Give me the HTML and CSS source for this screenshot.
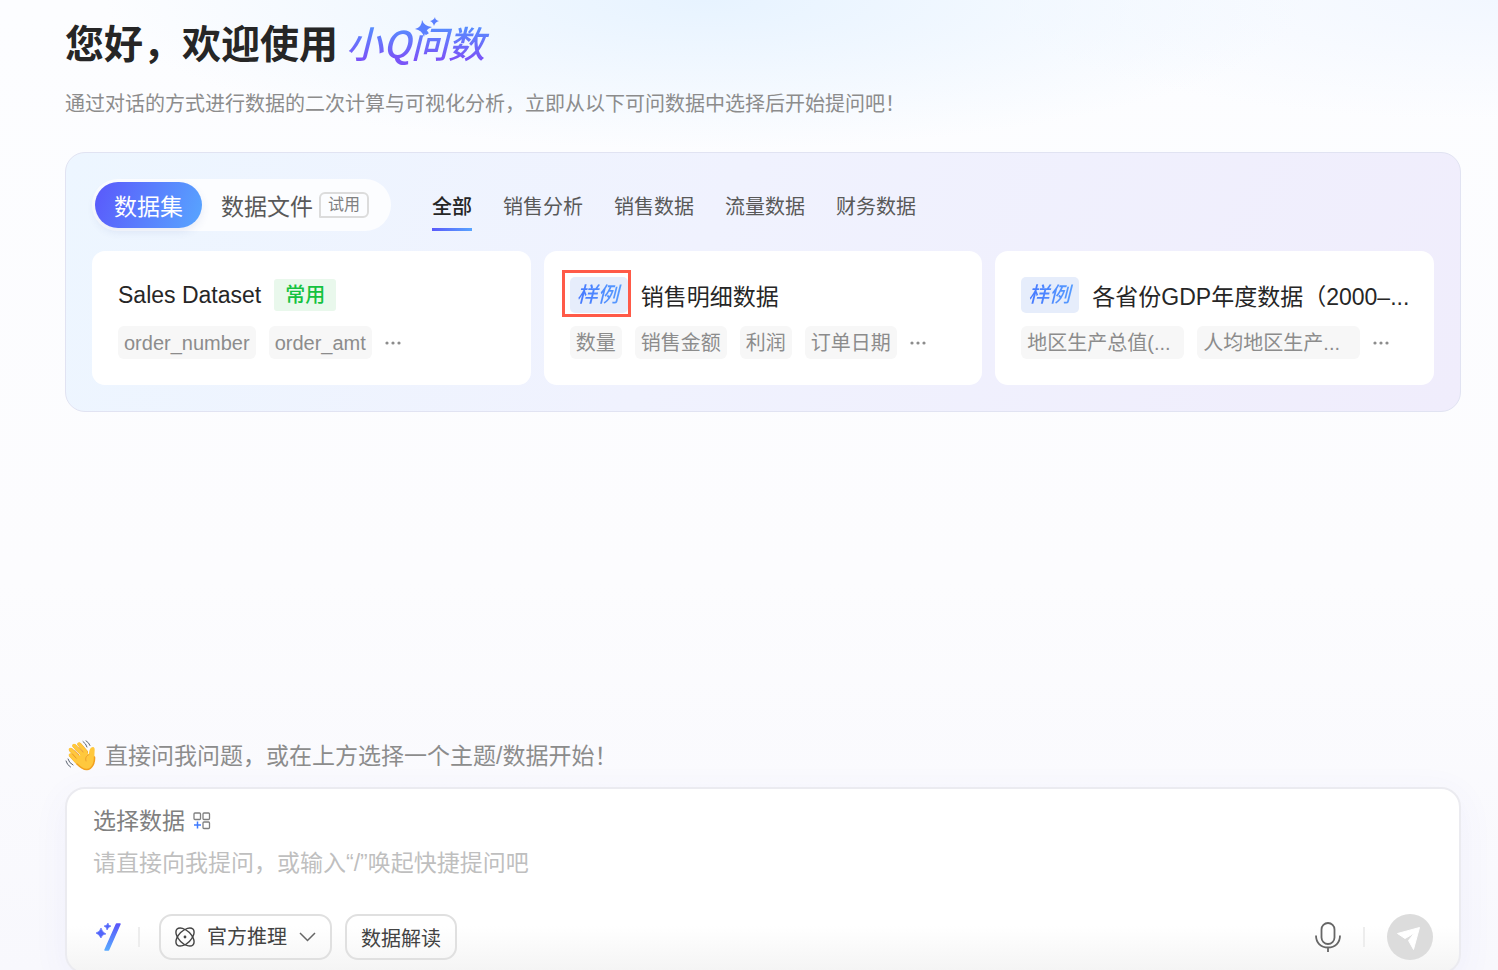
FILE: index.html
```html
<!DOCTYPE html>
<html lang="zh-CN">
<head>
  <meta charset="UTF-8" />
  <meta name="viewport" content="width=device-width, initial-scale=1.0" />
  <title>小Q问数</title>
  <link rel="stylesheet" href="styles.css">
</head>
<body>
  <main class="page">
    <header>
      <h1>您好，欢迎使用
        <span class="logo">
          <span class="logo-text">小Q问数</span>
          <svg class="logo-stars" width="26" height="24" viewBox="0 0 26 24" fill="#5b80ff">
            <path d="M7 3Q9 9 17 10Q10 12 9 20Q7 13 0 12Q7 10 7 3z" />
            <path d="M20 0Q20 3 24 4Q20 5 19 9Q18 5 15 4Q19 3 20 0z" />
          </svg>
        </span>
      </h1>
      <p class="subtitle">通过对话的方式进行数据的二次计算与可视化分析，立即从以下可问数据中选择后开始提问吧！</p>
    </header>

    <section class="panel">
      <div class="panel-top">
        <div class="switch">
          <button class="switch-item active">数据集</button>
          <button class="switch-item">数据文件<span class="trial">试用</span></button>
        </div>
        <nav class="tabs">
          <button class="tab active">全部</button>
          <button class="tab">销售分析</button>
          <button class="tab">销售数据</button>
          <button class="tab">流量数据</button>
          <button class="tab">财务数据</button>
        </nav>
      </div>

      <div class="cards">
        <article class="card">
          <div class="card-title">
            <h2>Sales Dataset</h2>
            <span class="common">常用</span>
          </div>
          <div class="tags">
            <span class="tag">order_number</span>
            <span class="tag">order_amt</span>
            <button class="more" aria-label="更多"><svg width="16" height="4" viewBox="0 0 16 4"><circle cx="2" cy="2" r="1.6" /><circle cx="8" cy="2" r="1.6" /><circle cx="14" cy="2" r="1.6" /></svg></button>
          </div>
        </article>
        <article class="card">
          <div class="card-title">
            <span class="sample marked"><span>样例</span></span>
            <h2>销售明细数据</h2>
          </div>
          <div class="tags">
            <span class="tag">数量</span>
            <span class="tag">销售金额</span>
            <span class="tag">利润</span>
            <span class="tag">订单日期</span>
            <button class="more" aria-label="更多"><svg width="16" height="4" viewBox="0 0 16 4"><circle cx="2" cy="2" r="1.6" /><circle cx="8" cy="2" r="1.6" /><circle cx="14" cy="2" r="1.6" /></svg></button>
          </div>
        </article>
        <article class="card">
          <div class="card-title">
            <span class="sample"><span>样例</span></span>
            <h2>各省份GDP年度数据（2000–...</h2>
          </div>
          <div class="tags">
            <span class="tag long">地区生产总值(...</span>
            <span class="tag long">人均地区生产...</span>
            <button class="more" aria-label="更多"><svg width="16" height="4" viewBox="0 0 16 4"><circle cx="2" cy="2" r="1.6" /><circle cx="8" cy="2" r="1.6" /><circle cx="14" cy="2" r="1.6" /></svg></button>
          </div>
        </article>
      </div>
    </section>

    <div class="hint">
      <svg width="32" height="32" viewBox="0 0 32 32" fill="none" stroke-linecap="round">
        <path d="M6 15.500 13 23M6 10 15 19M9.500 6 18 15M14.500 4.500 21 12" stroke="#f0a52a" stroke-width="4" />
        <path d="M5.500 15 12 22M5.500 9.500 14 18M9 5.500 17 14M14 4 20.500 11.500" stroke="#ffc83d" stroke-width="3.400" />
        <path d="M11 20 20 10 24 14.500C24 11 25 7 28 7 31 7.500 29 12 29.500 17 30 23 27 29 22 29.500 17 30 13 26 9.500 21z" fill="#ffc83d" />
        <path d="M29.500 17C30 23 27 29 22 29.500 18 30 15 27 12 24" stroke="#f2a01e" stroke-width="1.500" />
        <path d="M24 14.500C21 16 20 18 21 21M11 18 7.500 14M14 15 9.500 10M18 12 14 7.500" stroke="#e8962a" stroke-width="0.800" />
        <path d="M18 1.500Q21 3.500 22 7M21 0.800Q24 2.500 25 5.500M3 19Q4 23 8 25M1 21Q2 25 5.500 27" stroke="#5c6470" />
      </svg>
      <span>直接问我问题，或在上方选择一个主题/数据开始！</span>
    </div>

    <form class="composer">
      <button type="button" class="pick">选择数据
        <svg width="18" height="18" viewBox="0 0 18 18" fill="none" stroke="#808080" stroke-width="1.300">
          <rect x="1" y="1" width="6.500" height="6.500" rx="1" />
          <rect x="10" y="1" width="6.500" height="6.500" rx="1" />
          <rect x="10" y="10" width="6.500" height="6.500" rx="1" />
          <path d="M4.500 9.500v7M1 13h7" stroke="#3f7bff" stroke-width="1.500" />
        </svg>
      </button>
      <input class="question" type="text" aria-label="提问" placeholder="请直接向我提问，或输入“/”唤起快捷提问吧" />
      <div class="toolbar">
        <button type="button" class="icon-btn" aria-label="快捷提问">
          <svg width="26" height="30" viewBox="0 0 26 30">
            <defs>
              <linearGradient id="wand" x1="0" y1="0" x2="0" y2="1">
                <stop offset="0" stop-color="#5a55fa" />
                <stop offset="1" stop-color="#58a9ff" />
              </linearGradient>
            </defs>
            <path d="M20.500 2h3.500L12.500 28H9z" fill="url(#wand)" stroke="url(#wand)" stroke-width="1.500" stroke-linejoin="round" />
            <path d="M5 6Q6 10 10 12Q6 12 5 16Q3 12 0 11Q4 10 5 6z" fill="#5165fb" stroke="#5165fb" stroke-width="0.600" />
            <path d="M12 1Q12 4 15 4Q12 5 11 8Q11 5 8 4Q11 4 12 1z" fill="#5165fb" stroke="#5165fb" stroke-width="0.600" />
          </svg>
        </button>
        <span class="divider"></span>
        <label class="pill">
          <svg width="20" height="20" viewBox="0 0 20 20" fill="none" stroke="#444" stroke-width="1.400">
            <ellipse cx="10" cy="10" rx="11.200" ry="6.200" transform="rotate(45 10 10)" />
            <ellipse cx="10" cy="10" rx="11.200" ry="6.200" transform="rotate(-45 10 10)" />
            <circle cx="10" cy="10" r="1.400" fill="#444" stroke="none" />
          </svg>
          <select aria-label="推理模型">
            <option>官方推理</option>
          </select>
          <svg width="17" height="10" viewBox="0 0 17 10" fill="none" stroke="#666" stroke-width="1.500"><path d="M1 1l7.500 7.500L16 1" /></svg>
        </label>
        <button type="button" class="pill">数据解读</button>
        <button type="button" class="icon-btn mic" aria-label="语音输入">
          <svg width="26" height="30" viewBox="0 0 26 30" fill="none" stroke="#666" stroke-width="1.800">
            <rect x="6.500" y="1" width="13" height="21" rx="6.500" />
            <path d="M1 13.500C1 21 6 25.500 13 25.500S25 21 25 13.500M13 25.500V30" />
          </svg>
        </button>
        <span class="divider"></span>
        <button type="submit" class="send" aria-label="发送">
          <svg width="46" height="46" viewBox="0 0 46 46" fill="#fff" stroke="#fff" stroke-linejoin="round">
            <path d="M10.500 19.500 32.500 13.500 26.500 35.500 21.500 26.500 27.500 19 18 24.500z" />
          </svg>
        </button>
      </div>
    </form>
  </main>
</body>
</html>
```
FILE: styles.css
```css
* {
  box-sizing: border-box;
  margin: 0;
  padding: 0;
}
body {
  font-family: "Liberation Sans", "Noto Sans CJK SC", sans-serif;
  color: #262626;
  background-color: #fcfcfe;
  overflow: hidden;
}
button, input, select {
  font-family: inherit;
  color: inherit;
  background: none;
  border: none;
}
button {
  cursor: pointer;
}
svg {
  display: block;
  flex-shrink: 0;
}
.page {
  display: flex;
  flex-direction: column;
  height: 100vh;
  padding: 18px 37px 0 65px;
  background:
    radial-gradient(ellipse 600px 150px at 47% 0, #e7f3ff, rgba(231,243,255,0)),
    radial-gradient(ellipse 500px 120px at 100% 0, #f2f7ff, rgba(242,247,255,0)),
    linear-gradient(#fcfdff, #fcfcfe 60%, #f8f8fd);
}
h1 {
  display: flex;
  align-items: center;
  gap: 8px;
  height: 54px;
  font-size: 39px;
  font-weight: bold;
  line-height: 54px;
  white-space: nowrap;
}
.logo {
  position: relative;
  margin-bottom: 6px;
  font-family: "Noto Sans CJK SC", sans-serif;
  font-size: 37px;
  font-style: italic;
  font-weight: 500;
}
.logo-text {
  padding-right: 6px;
  background: linear-gradient(#5590ff 20%, #7a55f8 80%);
  background-clip: text;
  -webkit-background-clip: text;
  color: transparent;
}
.logo-stars {
  position: absolute;
  left: 69px;
  top: 2px;
}
.subtitle {
  margin-top: 16px;
  font-size: 20px;
  line-height: 32px;
  color: #8c8c8c;
}
.panel {
  margin-top: 32px;
  padding: 26px;
  border: 1px solid #e1e3f2;
  border-radius: 20px;
  background: linear-gradient(115deg, #edf6ff, #f0f2fe 45%, #f0edfc);
}
.panel-top {
  display: flex;
  gap: 41px;
  margin-bottom: 20px;
}
.switch {
  display: flex;
  align-items: center;
  height: 52px;
  padding: 0 3px;
  border-radius: 26px;
  background: #fcfdff;
}
.switch-item {
  display: flex;
  align-items: center;
  gap: 6px;
  height: 46px;
  padding: 0 19px;
  border-radius: 23px;
  font-size: 23px;
  color: #595959;
}
.switch-item.active {
  background: linear-gradient(110deg, #5a58fb, #58a6ff);
  color: white;
  box-shadow: 0 4px 8px rgba(60,80,160,0.1);
}
.trial {
  padding: 0 7px;
  border: 2px solid #dcdcdc;
  border-radius: 6px 6px 6px 1px;
  font-size: 16px;
  line-height: 22px;
  color: #808080;
}
.tabs {
  display: flex;
  gap: 31px;
}
.tab {
  padding-top: 3px;
  font-size: 20px;
  color: #595959;
  border-bottom: 3px solid transparent;
}
.tab.active {
  color: #262626;
  font-weight: 500;
  border-image: linear-gradient(90deg, #5a58fb, #58a6ff) 1;
}
.cards {
  display: grid;
  grid-template-columns: repeat(3, minmax(0, 1fr));
  gap: 13px;
}
.card {
  padding: 26px;
  border-radius: 13px;
  background: white;
}
.card-title {
  display: flex;
  align-items: center;
  gap: 13px;
  height: 36px;
}
.card-title h2 {
  font-size: 23px;
  font-weight: normal;
  white-space: nowrap;
}
.common {
  padding: 0 11px;
  border-radius: 3px;
  background: #e9f8ec;
  font-size: 20px;
  font-weight: 500;
  line-height: 32px;
  color: #14c240;
}
.sample {
  position: relative;
  padding: 0 1px 0 7px;
  border-radius: 5px;
  background: #e6edfb;
  font-size: 21px;
  font-style: italic;
  font-weight: 500;
  line-height: 36px;
  white-space: nowrap;
}
.sample span {
  padding-right: 8px;
  background: linear-gradient(90deg, #4678ff, #58a0ff);
  background-clip: text;
  -webkit-background-clip: text;
  color: transparent;
}
.sample.marked::after {
  content: "";
  position: absolute;
  inset: -7px -3px -4px -8px;
  border: 3px solid #ff5a48;
}
.tags {
  display: flex;
  gap: 13px;
  margin-top: 13px;
}
.tag {
  padding: 1px 6px 0;
  border-radius: 6px;
  background: #f7f7f7;
  font-size: 20px;
  line-height: 32px;
  color: #8c8c8c;
  white-space: nowrap;
}
.tag.long {
  width: 163px;
}
.more svg {
  fill: #8c8c8c;
}
.hint {
  display: flex;
  align-items: center;
  gap: 8px;
  margin-top: auto;
  margin-bottom: 14px;
  font-size: 23px;
  line-height: 34px;
  color: #8c8c8c;
}
.composer {
  /* bottom edge runs just past the window */
  margin-bottom: -4px;
  padding: 16px 26px 12px;
  border: 2px solid #ebebf0;
  border-radius: 20px;
  background: linear-gradient(white 75%, #f4f4f4);
  box-shadow: 0 8px 36px rgba(90,80,220,0.06);
}
.pick {
  display: flex;
  align-items: center;
  gap: 8px;
  font-size: 23px;
  line-height: 32px;
  color: #808080;
}
.question {
  display: block;
  width: 100%;
  height: 32px;
  margin: 10px 0 35px;
  font-size: 23px;
  outline: none;
}
.question::placeholder {
  color: #bfbfbf;
}
.toolbar {
  display: flex;
  align-items: center;
  gap: 13px;
}
.icon-btn {
  padding: 0 3px;
}
.divider {
  width: 2px;
  height: 20px;
  margin-right: 6px;
  background: #ededed;
}
.pill {
  display: flex;
  align-items: center;
  gap: 12px;
  height: 46px;
  padding: 0 14px;
  border: 2px solid #e0e0e0;
  border-radius: 13px;
  font-size: 20px;
  color: #434343;
}
.pill select {
  appearance: none;
  font-size: 20px;
}
.mic {
  margin-left: auto;
  margin-right: 6px;
}
.send {
  margin-left: 3px;
  border-radius: 50%;
  background: #dcdcdc;
}
```
